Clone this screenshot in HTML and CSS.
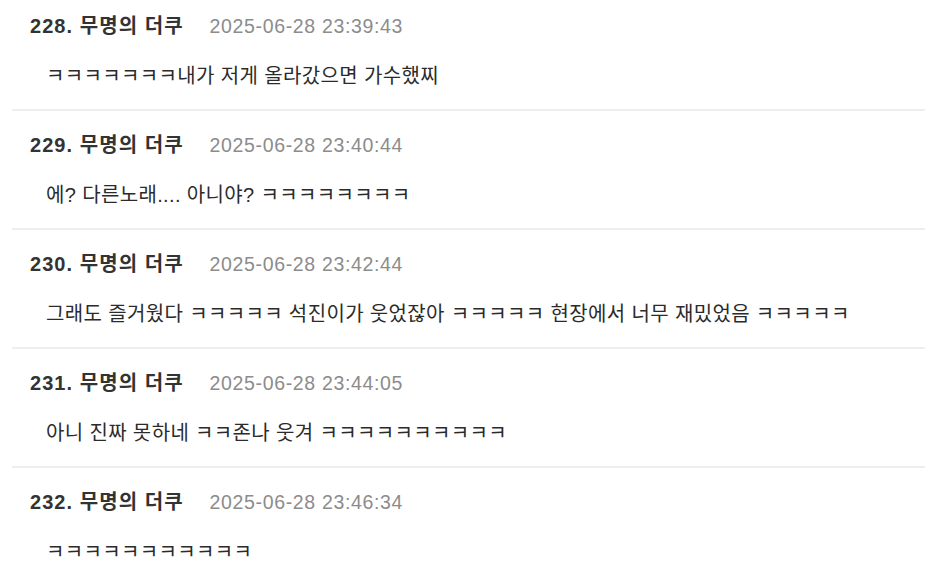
FILE: index.html
```html
<!DOCTYPE html>
<html lang="ko">
<head>
<meta charset="utf-8">
<title>댓글</title>
<link rel="stylesheet" href="styles.css">
</head>
<body>
<ul class="thread">
  <li class="comment">
    <div class="meta"><span class="author">228. 무명의 더쿠</span><span class="date">2025-06-28 23:39:43</span></div>
    <p class="text">ㅋㅋㅋㅋㅋㅋㅋ내가 저게 올라갔으면 가수했찌</p>
  </li>
  <li class="comment">
    <div class="meta"><span class="author">229. 무명의 더쿠</span><span class="date">2025-06-28 23:40:44</span></div>
    <p class="text">에? 다른노래.... 아니야? ㅋㅋㅋㅋㅋㅋㅋㅋ</p>
  </li>
  <li class="comment">
    <div class="meta"><span class="author">230. 무명의 더쿠</span><span class="date">2025-06-28 23:42:44</span></div>
    <p class="text">그래도 즐거웠다 ㅋㅋㅋㅋㅋ 석진이가 웃었잖아 ㅋㅋㅋㅋㅋ 현장에서 너무 재밌었음 ㅋㅋㅋㅋㅋ</p>
  </li>
  <li class="comment">
    <div class="meta"><span class="author">231. 무명의 더쿠</span><span class="date">2025-06-28 23:44:05</span></div>
    <p class="text">아니 진짜 못하네 ㅋㅋ존나 웃겨 ㅋㅋㅋㅋㅋㅋㅋㅋㅋㅋ</p>
  </li>
  <li class="comment">
    <div class="meta"><span class="author">232. 무명의 더쿠</span><span class="date">2025-06-28 23:46:34</span></div>
    <p class="text">ㅋㅋㅋㅋㅋㅋㅋㅋㅋㅋㅋ</p>
  </li>
</ul>
</body>
</html>
```
FILE: styles.css
```css
html, body {
  margin: 0;
  padding: 0;
  background: #ffffff;
}
body {
  font-family: "Liberation Sans", "Noto Sans CJK KR", sans-serif;
  color: #333333;
  overflow: hidden;
}
.thread {
  list-style: none;
  margin: -8px 0 0 12px;
  padding: 0;
}
.comment {
  padding: 21px 0 20px 18px;
  border-bottom: 2px solid #eeeeee;
}
.meta {
  display: flex;
  align-items: baseline;
  gap: 26px;
  line-height: 26px;
}
.author {
  font-size: 20px;
  letter-spacing: 1.05px;
  font-weight: 700;
  color: #333333;
}
.date {
  font-size: 19.5px;
  letter-spacing: 0.65px;
  color: #8c8c8c;
}
.text {
  margin: 24px 0 0 16px;
  font-size: 20px;
  letter-spacing: 0.36px;
  line-height: 26px;
  color: #2b2b2b;
}
```
